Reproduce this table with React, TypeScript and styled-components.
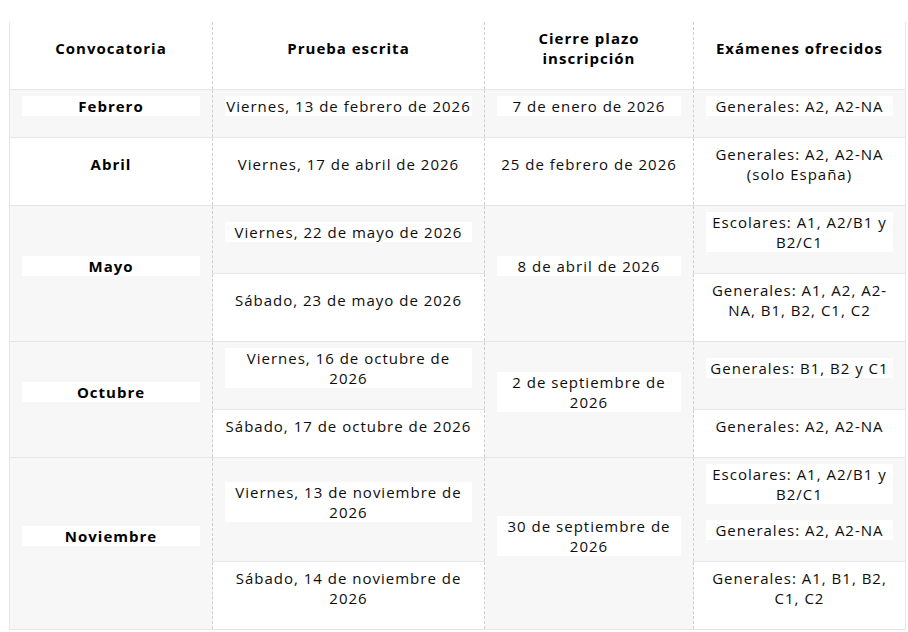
import React from "react";
import styled, { createGlobalStyle } from "styled-components";

const GlobalStyle = createGlobalStyle`
  body {
    margin: 0;
    background: #ffffff;
    font-family: "Open Sans", "DejaVu Sans", sans-serif;
    color: #0d0d0d;
  }
`;

const Page = styled.div`
  padding: 22px 3px 0 9px;
`;

const Table = styled.table`
  width: 896px;
  border-collapse: collapse;
  table-layout: fixed;
  border-left: 1px solid #e6e6e6;
  border-right: 1px solid #e6e6e6;
  font-size: 15px;
  letter-spacing: 1px;

  & tbody tr:nth-child(odd) {
    background: #f7f7f7;
  }
`;

const Head = styled.th`
  padding: 6px 12px 5px;
  font-weight: 700;
  color: #000;
  text-align: center;
  vertical-align: middle;
  border-bottom: 1px solid #e6e6e6;
  border-left: 1px dashed #cfcfcf;
  &:first-child {
    border-left: 1px solid #e6e6e6;
  }
`;

const Cell = styled.td<{ $first?: boolean }>`
  padding: 6px 12px 5px;
  text-align: center;
  vertical-align: middle;
  border-bottom: 1px solid #e6e6e6;
  border-left: ${({ $first }) =>
    $first ? "1px solid #e6e6e6" : "1px dashed #cfcfcf"};
  font-weight: ${({ $first }) => ($first ? 700 : 400)};
  color: ${({ $first }) => ($first ? "#000" : "#0d0d0d")};
`;

const Para = styled.p`
  margin: 0 0 16px;
  line-height: 20px;
  background: #ffffff;
  white-space: pre-line;
`;

const HeadText = styled.p`
  margin: 0 0 16px;
  line-height: 20px;
`;

type Exam = string[];

interface Session {
  month: string;
  deadline: string;
  dates: { day: string; exams: Exam }[];
}

const sessions: Session[] = [
  {
    month: "Febrero",
    deadline: "7 de enero de 2026",
    dates: [
      { day: "Viernes, 13 de febrero de 2026", exams: ["Generales: A2, A2-NA"] },
    ],
  },
  {
    month: "Abril",
    deadline: "25 de febrero de 2026",
    dates: [
      {
        day: "Viernes, 17 de abril de 2026",
        exams: ["Generales: A2, A2-NA (solo España)"],
      },
    ],
  },
  {
    month: "Mayo",
    deadline: "8 de abril de 2026",
    dates: [
      {
        day: "Viernes, 22 de mayo de 2026",
        exams: ["Escolares: A1, A2/B1 y B2/C1"],
      },
      {
        day: "Sábado, 23 de mayo de 2026",
        exams: ["Generales: A1, A2, A2-NA, B1, B2, C1, C2"],
      },
    ],
  },
  {
    month: "Octubre",
    deadline: "2 de septiembre de 2026",
    dates: [
      {
        day: "Viernes, 16 de octubre de\n2026",
        exams: ["Generales: B1, B2 y C1"],
      },
      {
        day: "Sábado, 17 de octubre de 2026",
        exams: ["Generales: A2, A2-NA"],
      },
    ],
  },
  {
    month: "Noviembre",
    deadline: "30 de septiembre de 2026",
    dates: [
      {
        day: "Viernes, 13 de noviembre de 2026",
        exams: ["Escolares: A1, A2/B1 y B2/C1", "Generales: A2, A2-NA"],
      },
      {
        day: "Sábado, 14 de noviembre de 2026",
        exams: ["Generales: A1, B1, B2, C1, C2"],
      },
    ],
  },
];

export default function App() {
  return (
    <Page>
      <GlobalStyle />
      <Table>
        <colgroup>
          <col style={{ width: 203 }} />
          <col style={{ width: 272 }} />
          <col style={{ width: 209 }} />
          <col style={{ width: 212 }} />
        </colgroup>
        <thead>
          <tr>
            <Head>
              <HeadText>Convocatoria</HeadText>
            </Head>
            <Head>
              <HeadText>Prueba escrita</HeadText>
            </Head>
            <Head>
              <HeadText>Cierre plazo inscripción</HeadText>
            </Head>
            <Head>
              <HeadText>Exámenes ofrecidos</HeadText>
            </Head>
          </tr>
        </thead>
        <tbody>
          {sessions.map((s) =>
            s.dates.map((d, i) => (
              <tr key={s.month + i}>
                {i === 0 && (
                  <Cell $first rowSpan={s.dates.length}>
                    <Para>{s.month}</Para>
                  </Cell>
                )}
                <Cell>
                  <Para>{d.day}</Para>
                </Cell>
                {i === 0 && (
                  <Cell rowSpan={s.dates.length}>
                    <Para>{s.deadline}</Para>
                  </Cell>
                )}
                <Cell>
                  {d.exams.map((e) => (
                    <Para key={e}>{e}</Para>
                  ))}
                </Cell>
              </tr>
            ))
          )}
        </tbody>
      </Table>
    </Page>
  );
}
